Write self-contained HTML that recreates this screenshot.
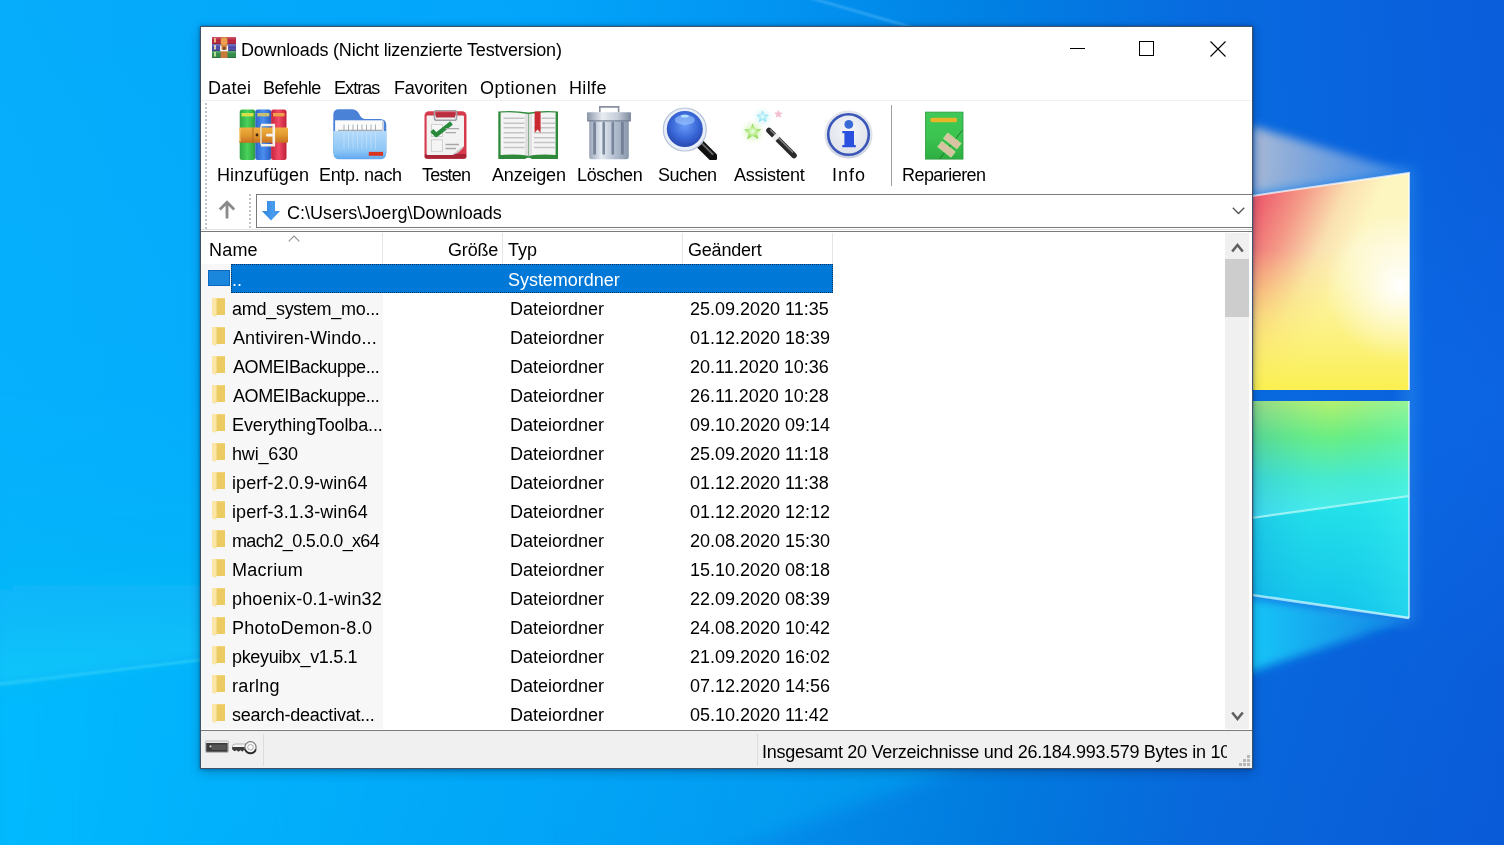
<!DOCTYPE html>
<html><head><meta charset="utf-8">
<style>
*{margin:0;padding:0;box-sizing:border-box}
html,body{width:1504px;height:845px;overflow:hidden}
body{position:relative;-webkit-font-smoothing:antialiased;font-family:"Liberation Sans",sans-serif;font-size:18px;color:#000;background:#0a9be8}
.a{position:absolute}
.t{position:absolute;line-height:20px;white-space:nowrap;will-change:transform}
#bg{position:absolute;left:0;top:0;width:1504px;height:845px;overflow:hidden}
#win{position:absolute;left:200px;top:26px;width:1053px;height:743px;background:#fff;border:1px solid rgba(0,25,60,.75);box-shadow:0 0 3px rgba(0,20,60,.45),0 3px 10px rgba(0,30,70,.3)}
.tl{width:120px;text-align:center;letter-spacing:-0.35px}
.row{position:absolute;left:0;height:29px;width:1050px}
.fold{position:absolute;left:11px;top:4px;width:13px;height:19px}
</style></head><body>
<div id="bg">
  <svg class="a" style="left:0;top:0" width="1504" height="845">
    <defs>
      <linearGradient id="baseH" x1="0" y1="0" x2="1504" y2="0" gradientUnits="userSpaceOnUse">
        <stop offset="0" stop-color="#06b0fc"/>
        <stop offset="0.36" stop-color="#02a8fc"/>
        <stop offset="0.52" stop-color="#0296f2"/>
        <stop offset="0.66" stop-color="#0082e4"/>
        <stop offset="0.8" stop-color="#086ce0"/>
        <stop offset="1" stop-color="#0a5edc"/>
      </linearGradient>
      <linearGradient id="baseV" x1="0" y1="0" x2="0" y2="845" gradientUnits="userSpaceOnUse">
        <stop offset="0" stop-color="#0a40c8" stop-opacity="0.03"/>
        <stop offset="0.5" stop-color="#0a50c0" stop-opacity="0"/>
        <stop offset="1" stop-color="#0a40b0" stop-opacity="0.12"/>
      </linearGradient>
      <linearGradient id="lowBeam" x1="0" y1="0" x2="1252" y2="0" gradientUnits="userSpaceOnUse">
        <stop offset="0" stop-color="#06bcff" stop-opacity=".9"/>
        <stop offset="0.45" stop-color="#04b0fc" stop-opacity=".4"/>
        <stop offset="1" stop-color="#10b0f4" stop-opacity=".45"/>
      </linearGradient>
      <linearGradient id="base" x1="1100" y1="0" x2="1504" y2="845" gradientUnits="userSpaceOnUse">
        <stop offset="0" stop-color="#0a70da"/>
        <stop offset="0.5" stop-color="#0968d6"/>
        <stop offset="1" stop-color="#0a52c0"/>
      </linearGradient>
      <linearGradient id="wedge" x1="0" y1="0" x2="1409" y2="0" gradientUnits="userSpaceOnUse">
        <stop offset="0" stop-color="#06b0fc"/>
        <stop offset="0.45" stop-color="#04b6fe"/>
        <stop offset="0.7" stop-color="#06a4f6"/>
        <stop offset="0.9" stop-color="#1aa0ee"/>
        <stop offset="1" stop-color="#2aa8f0"/>
      </linearGradient>
      <linearGradient id="leftV" x1="0" y1="0" x2="0" y2="845" gradientUnits="userSpaceOnUse">
        <stop offset="0" stop-color="#0898f0" stop-opacity=".25"/>
        <stop offset="0.45" stop-color="#05a5ef" stop-opacity="0"/>
        <stop offset="1" stop-color="#08bcff" stop-opacity=".45"/>
      </linearGradient>
      <linearGradient id="topP" x1="1252" y1="215" x2="1350" y2="260" gradientUnits="userSpaceOnUse">
        <stop offset="0" stop-color="#ee5e6c"/>
        <stop offset="0.35" stop-color="#f49a88"/>
        <stop offset="0.7" stop-color="#fae0b0"/>
        <stop offset="1" stop-color="#fdf6c0"/>
      </linearGradient>
      <linearGradient id="topPv" x1="0" y1="250" x2="0" y2="390" gradientUnits="userSpaceOnUse">
        <stop offset="0" stop-color="#fcf070" stop-opacity="0"/>
        <stop offset="0.5" stop-color="#fcf070" stop-opacity="0.65"/>
        <stop offset="1" stop-color="#faf050" stop-opacity="1"/>
      </linearGradient>
      <radialGradient id="glow" cx="1400" cy="286" r="75" gradientUnits="userSpaceOnUse">
        <stop offset="0" stop-color="#ffffff" stop-opacity="1"/>
        <stop offset="1" stop-color="#ffffff" stop-opacity="0"/>
      </radialGradient>
      <linearGradient id="botP" x1="0" y1="401" x2="0" y2="518" gradientUnits="userSpaceOnUse">
        <stop offset="0" stop-color="#b4f070"/>
        <stop offset="0.3" stop-color="#6cee80"/>
        <stop offset="0.65" stop-color="#48eacc"/>
        <stop offset="1" stop-color="#48ecf4"/>
      </linearGradient>
      <linearGradient id="botP2" x1="0" y1="500" x2="0" y2="618" gradientUnits="userSpaceOnUse">
        <stop offset="0" stop-color="#24e2e8"/>
        <stop offset="1" stop-color="#12c2ec"/>
      </linearGradient>
      <linearGradient id="botH" x1="1252" y1="0" x2="1409" y2="0" gradientUnits="userSpaceOnUse">
        <stop offset="0" stop-color="#0a70d8" stop-opacity=".22"/>
        <stop offset="0.5" stop-color="#20e0f0" stop-opacity="0"/>
        <stop offset="1" stop-color="#50fff0" stop-opacity=".3"/>
      </linearGradient>
      <linearGradient id="beamB" x1="1409" y1="0" x2="1252" y2="0" gradientUnits="userSpaceOnUse">
        <stop offset="0" stop-color="#20c8f4" stop-opacity=".3"/>
        <stop offset="1" stop-color="#14c4f8" stop-opacity="1"/>
      </linearGradient>
      <linearGradient id="beamT" x1="1252" y1="0" x2="1409" y2="0" gradientUnits="userSpaceOnUse">
        <stop offset="0" stop-color="#b0bcd4" stop-opacity=".95"/>
        <stop offset="1" stop-color="#90b8e8" stop-opacity=".4"/>
      </linearGradient>
      <linearGradient id="rightGlow" x1="0" y1="120" x2="0" y2="680" gradientUnits="userSpaceOnUse">
        <stop offset="0" stop-color="#1070f0" stop-opacity="0"/>
        <stop offset="0.5" stop-color="#1070f0" stop-opacity=".35"/>
        <stop offset="1" stop-color="#1070f0" stop-opacity="0"/>
      </linearGradient>
      <linearGradient id="upBeam" x1="0" y1="400" x2="0" y2="689" gradientUnits="userSpaceOnUse">
        <stop offset="0" stop-color="#08bcfc" stop-opacity="0"/>
        <stop offset="0.6" stop-color="#0cc0fa" stop-opacity=".45"/>
        <stop offset="1" stop-color="#12cafa" stop-opacity=".95"/>
      </linearGradient>
      <filter id="bl1" x="-10%" y="-50%" width="120%" height="200%"><feGaussianBlur stdDeviation="0.8"/></filter>
      <filter id="bl" x="-20%" y="-20%" width="140%" height="140%"><feGaussianBlur stdDeviation="9"/></filter>
      <filter id="bl2" x="-20%" y="-50%" width="140%" height="200%"><feGaussianBlur stdDeviation="5"/></filter>
      <filter id="bl3" x="-50%" y="-50%" width="200%" height="200%"><feGaussianBlur stdDeviation="7"/></filter>
    </defs>
    <rect width="1504" height="845" fill="url(#baseH)"/>
    <rect width="1504" height="845" fill="url(#baseV)"/>
    <polygon points="1252,518 -10,690 -10,860 700,860 1252,662" fill="url(#lowBeam)" filter="url(#bl)"/>
    <polygon points="1252,401 -10,380 -10,689 1252,518" fill="url(#upBeam)" filter="url(#bl)"/>
    <polyline points="-10,685 1252,535" stroke="#30d4fa" stroke-width="2" opacity=".8" filter="url(#bl1)"/>
    <polyline points="790,-8 1252,126" stroke="#48b4f8" stroke-width="2.2" opacity=".75" filter="url(#bl1)"/>
    <rect x="1409" y="120" width="95" height="560" fill="url(#rightGlow)"/>
    <!-- beam above top pane -->
    <polygon points="1252,126 1409,173 1252,196" fill="url(#beamT)" filter="url(#bl2)"/>
    <!-- glow around logo -->
    <polyline points="1252,196 1409,173 1409,618 1252,595" stroke="#40a0f0" stroke-width="8" fill="none" opacity=".55" filter="url(#bl3)"/>
    <polygon points="1252,196 1409,173 1409,390 1252,390" fill="url(#topP)"/>
    <polygon points="1252,196 1409,173 1409,390 1252,390" fill="url(#topPv)"/>
    <polygon points="1252,196 1409,173 1409,390 1252,390" fill="url(#glow)"/>
    <polygon points="1252,401 1409,401 1409,496 1252,518" fill="url(#botP)"/>
    <polygon points="1252,518 1409,496 1409,618 1252,595" fill="url(#botP2)"/>
    <polygon points="1252,401 1409,401 1409,618 1252,595" fill="url(#botH)"/>
    <polyline points="1252,518 1409,496" stroke="#c8fff8" stroke-width="2.2" fill="none" opacity="0.7"/>
    <polyline points="1252,595 1409,618" stroke="#e8ffff" stroke-width="2.5" fill="none" opacity="0.8"/>
    <polyline points="1409,401 1409,618" stroke="#e0ffff" stroke-width="2" fill="none" opacity="0.6"/>
    <polyline points="1252,196 1409,173 1409,390" stroke="#ffffff" stroke-width="2" fill="none" opacity="0.7"/>
    <!-- beam below bottom pane -->
    <polygon points="1240,597 1409,620 1240,675" fill="url(#beamB)" filter="url(#bl2)"/>
  </svg>
</div>
<div id="win"></div>
<!-- title bar -->
<svg class="a" style="left:212px;top:37px" width="24" height="21" viewBox="0 0 24 21">
  <defs><linearGradient id="wv" x1="0" y1="0" x2="0" y2="1"><stop offset="0" stop-color="#fff" stop-opacity=".25"/><stop offset=".5" stop-color="#fff" stop-opacity="0"/><stop offset="1" stop-color="#000" stop-opacity=".25"/></linearGradient></defs>
  <rect x="0" y="0" width="24" height="7" fill="#b8223c"/><rect x="0" y="0" width="24" height="7" fill="url(#wv)"/>
  <rect x="0" y="7" width="24" height="7" fill="#4a48a8"/><rect x="0" y="7" width="24" height="7" fill="url(#wv)"/>
  <rect x="0" y="14" width="24" height="7" fill="#2e8a44"/><rect x="0" y="14" width="24" height="7" fill="url(#wv)"/>
  <rect x="2" y="1" width="2" height="4.5" fill="#f0b080"/>
  <rect x="2" y="8" width="2" height="4.5" fill="#d8d0b0"/>
  <rect x="2" y="15" width="2" height="4.5" fill="#b8e090"/>
  <rect x="8.7" y="0" width="6.8" height="21" fill="#c87a3a"/>
  <rect x="9" y="0.5" width="6.2" height="8" rx="3" fill="#eca050"/>
  <path d="M8.8 8.5V13.5H15.4V8.5" stroke="#fafafa" stroke-width="1.4" fill="none"/>
  <rect x="11" y="10" width="2.4" height="3" fill="#7a4a2a"/>
</svg>
<div class="t" style="left:241.3px;top:39.5px;letter-spacing:-0.198px">Downloads (Nicht lizenzierte Testversion)</div>
<div class="a" style="left:1070px;top:48px;width:15px;height:1px;background:#000"></div>
<div class="a" style="left:1139px;top:41px;width:15px;height:15px;border:1px solid #000"></div>
<svg class="a" style="left:1210px;top:41px" width="16" height="16"><path d="M0.5 0.5L15.5 15.5M15.5 0.5L0.5 15.5" stroke="#000" stroke-width="1.1"/></svg>
<!-- menu -->
<div class="t" style="left:207.9px;top:77.8px;letter-spacing:0.25px">Datei</div>
<div class="t" style="left:263.2px;top:77.8px;letter-spacing:-0.45px">Befehle</div>
<div class="t" style="left:334.4px;top:77.8px;letter-spacing:-0.94px">Extras</div>
<div class="t" style="left:393.9px;top:77.8px;letter-spacing:-0.2px">Favoriten</div>
<div class="t" style="left:479.6px;top:77.8px;letter-spacing:0.5px">Optionen</div>
<div class="t" style="left:569px;top:77.8px;letter-spacing:0.35px">Hilfe</div>
<div class="a" style="left:201px;top:100px;width:1051px;height:1px;background:#f0f0f0"></div>
<!-- toolbar gripper -->
<div class="a" style="left:205px;top:103px;width:2px;height:127px;background:repeating-linear-gradient(#c4c4c4 0 2px,transparent 2px 4px)"></div>
<div class="a" style="left:891px;top:105px;width:1px;height:81px;background:#a0a0a0"></div>
<!-- Hinzufuegen -->
<svg class="a" style="left:239px;top:109px" width="49" height="52" viewBox="0 0 49 52">
  <defs>
    <linearGradient id="gG" x1="0" x2="1"><stop offset="0" stop-color="#2ea844"/><stop offset=".5" stop-color="#4ad25c"/><stop offset="1" stop-color="#2c9e40"/></linearGradient>
    <linearGradient id="gB" x1="0" x2="1"><stop offset="0" stop-color="#2c62c8"/><stop offset=".5" stop-color="#4a8ef0"/><stop offset="1" stop-color="#2a5cc0"/></linearGradient>
    <linearGradient id="gR" x1="0" x2="1"><stop offset="0" stop-color="#c82440"/><stop offset=".5" stop-color="#f04a66"/><stop offset="1" stop-color="#c02038"/></linearGradient>
    <linearGradient id="gBelt" x1="0" y1="0" x2="0" y2="1"><stop offset="0" stop-color="#f0b040"/><stop offset=".5" stop-color="#e09a30"/><stop offset="1" stop-color="#c87020"/></linearGradient>
  </defs>
  <rect x="0.7" y="0.5" width="15.6" height="50.5" rx="2.5" fill="url(#gG)"/>
  <rect x="16.3" y="0.5" width="15.8" height="50.5" rx="2.5" fill="url(#gB)"/>
  <rect x="32.1" y="0.5" width="15.4" height="50.5" rx="2.5" fill="url(#gR)"/>
  <rect x="2.5" y="4" width="12" height="3.4" fill="#d8e048"/>
  <rect x="18.3" y="4" width="12" height="3.4" fill="#c8c070"/>
  <rect x="34" y="4" width="11.5" height="3.4" fill="#f0a048"/>
  <rect x="0" y="18.4" width="49" height="15.3" rx="1.5" fill="url(#gBelt)"/>
  <path d="M1 19.5Q0 26 1 32.5" stroke="#f8d080" stroke-width="1.5" fill="none"/>
  <rect x="13.3" y="18.4" width="1.2" height="15.3" fill="#b06018" opacity=".7"/>
  <path d="M22 16H34.8V36.2H22" stroke="#f4f0ea" stroke-width="2.6" fill="none"/>
  <path d="M22 16.5V35.7" stroke="#e8d8c0" stroke-width="1.6"/>
  <circle cx="18" cy="26" r="1.4" fill="#402010"/>
  <rect x="27" y="24.8" width="8" height="2.8" rx="1.4" fill="#f4f4f4"/>
</svg>
<!-- Entp. nach -->
<svg class="a" style="left:333px;top:109px" width="54" height="51" viewBox="0 0 54 51">
  <defs>
    <linearGradient id="fFront" x1="0" y1="0" x2="0" y2="1"><stop offset="0" stop-color="#b4dafa"/><stop offset=".7" stop-color="#8cc6f6"/><stop offset="1" stop-color="#60a8ee"/></linearGradient>
  </defs>
  <path d="M0.3 6Q0.3 0.3 6 0.3H19Q23 0.3 26 4.5Q28 9.9 32 9.9H47Q53.3 9.9 53.3 16V44H0.3Z" fill="#4a82d8"/>
  <rect x="2.1" y="11.3" width="48" height="11" fill="#fbfbfb"/>
  <g stroke="#a8aeb6" stroke-width="1"><path d="M11 15.6V21.3M15.5 15.6V21.3M20 15.6V21.3M24.5 15.6V21.3M29 15.6V21.3M33.5 15.6V21.3M38 15.6V21.3M42.5 15.6V21.3"/></g>
  <path d="M5 21.3H49" stroke="#7a8088" stroke-width="0.8"/>
  <rect x="49" y="12" width="2" height="10" fill="#c8d0e0"/>
  <path d="M0.3 22H53.3V44Q53.3 50.3 47 50.3H6.3Q0.3 50.3 0.3 44Z" fill="url(#fFront)"/>
  <g stroke="#d0e8fc" stroke-width="1" opacity=".5"><path d="M11 23V40M15.5 23V40M20 23V40M24.5 23V40M29 23V40M33.5 23V40M38 23V40M42.5 23V40"/></g>
  <rect x="35.8" y="42.9" width="14.2" height="3.9" fill="#d83420"/>
</svg>
<!-- Testen -->
<svg class="a" style="left:424px;top:110px" width="44" height="50" viewBox="0 0 44 50">
  <rect x="0.5" y="1.3" width="42" height="47.5" rx="4.5" fill="#d63a4c"/>
  <rect x="0.5" y="44" width="42" height="4.8" rx="2" fill="#a82434"/>
  <path d="M2.6 6.5Q2.6 5.5 3.6 5.5H39Q40 5.5 40 6.5V36Q36 43 28 45H3.6Q2.6 45 2.6 44Z" fill="#f2f2f2"/>
  <path d="M40 36Q36 43 28 45Q35 39 40 36Z" fill="#c8c8c8"/>
  <rect x="10.5" y="0.5" width="22" height="9.8" rx="2" fill="none" stroke="#a0a0a8" stroke-width="1.6"/>
  <rect x="12" y="2.5" width="19" height="5" fill="#b83040"/>
  <rect x="7.4" y="14.6" width="11" height="12" fill="#f8f8f8" stroke="#c8c8c8" stroke-width=".8"/>
  <path d="M7.8 20.5L12.2 25L27.5 13" stroke="#2a8a3c" stroke-width="4.2" fill="none" stroke-linejoin="round"/>
  <rect x="7.4" y="29.8" width="11" height="11.5" fill="#f4f4f4" stroke="#c8c8c8" stroke-width=".8"/>
  <g stroke="#a8a8a8" stroke-width="1.4"><path d="M21.5 18.6H35M21.5 22.6H32M21.5 34.5H35M21.5 38.5H32"/></g>
</svg>
<!-- Anzeigen -->
<svg class="a" style="left:498px;top:110px" width="61" height="50" viewBox="0 0 61 50">
  <path d="M0.3 1.5Q15 0 30.5 2.5Q46 0 60 1.5V49H34Q30.5 46.5 27 49H0.3Z" fill="#2e8a3a"/>
  <path d="M2.6 2.5Q16 1.5 30 4V45.5Q17 44 2.6 45Z" fill="#f4f4f4"/>
  <path d="M31 4Q45 1.5 57.6 2.5V45Q45 44 31 45.5Z" fill="#f4f4f4"/>
  <path d="M27 4V45.5L30.5 46.5L34 45.5V4Z" fill="#d0d0d0" opacity=".55"/>
  <g stroke="#c4c4c4" stroke-width="1.5"><path d="M5.6 8.3H26.5M5.6 13.2H26.5M5.6 17.8H26.5M5.6 22.8H26.5M5.6 27.8H26.5M5.6 32.4H26.5M5.6 37.4H26.5"/>
  <path d="M43.6 8.3H57M43.6 13.2H57M36 17.8H57M36 22.8H57M36 27.8H57M36 32.4H57M36 37.4H57"/></g>
  <path d="M36.6 1.5H42.6V22.8L39.6 19.5L36.6 22.8Z" fill="#c82830"/>
</svg>
<!-- Loeschen -->
<svg class="a" style="left:586px;top:106px" width="46" height="55" viewBox="0 0 46 55">
  <defs>
    <linearGradient id="tLid" x1="0" x2="1"><stop offset="0" stop-color="#8a96a8"/><stop offset=".35" stop-color="#e8ecf2"/><stop offset=".7" stop-color="#c4ccd8"/><stop offset="1" stop-color="#7c889c"/></linearGradient>
    <linearGradient id="tBody" x1="0" x2="1"><stop offset="0" stop-color="#98a4b8"/><stop offset=".3" stop-color="#e4eaf2"/><stop offset=".6" stop-color="#b8c4d4"/><stop offset="1" stop-color="#8a98ac"/></linearGradient>
  </defs>
  <path d="M13.8 6.5V0.9H32.6V6.5" stroke="#8890a0" stroke-width="1.6" fill="none"/>
  <path d="M3.2 14.5H42.8V51Q42.8 53.2 40.6 53.2H5.4Q3.2 53.2 3.2 51Z" fill="url(#tBody)"/>
  <g fill="#6c7a90" opacity=".85"><rect x="7.2" y="15.8" width="2.8" height="33" rx="1.4"/><rect x="16.4" y="15.8" width="2.6" height="33" rx="1.3"/><rect x="25.5" y="15.8" width="2.6" height="33" rx="1.3"/><rect x="35" y="15.8" width="2.8" height="33" rx="1.4"/></g>
  <rect x="1" y="6.3" width="44" height="8.6" rx="1" fill="url(#tLid)"/>
  <path d="M1 14.9H45" stroke="#6a7488" stroke-width="1"/>
</svg>
<!-- Suchen -->
<svg class="a" style="left:661px;top:106px" width="56" height="54" viewBox="0 0 56 54">
  <defs>
    <radialGradient id="mBlue" cx=".5" cy=".4" r=".6"><stop offset="0" stop-color="#6a9cf8"/><stop offset=".6" stop-color="#3a68d8"/><stop offset="1" stop-color="#2848b0"/></radialGradient>
  </defs>
  <path d="M38 37L52 51" stroke="#101010" stroke-width="9" stroke-linecap="round"/>
  <path d="M40 36.5L51.5 48" stroke="#8a8a8a" stroke-width="2" stroke-linecap="round" opacity=".7"/>
  <circle cx="23.8" cy="23.5" r="21.5" fill="#e8eef8" stroke="#b8c4d8" stroke-width="1.2"/>
  <circle cx="23.8" cy="23" r="18" fill="url(#mBlue)"/>
  <ellipse cx="23.8" cy="14" rx="10" ry="5" fill="#9ec8ff" opacity=".6"/>
  <ellipse cx="23.8" cy="10" rx="4" ry="1.6" fill="#c0f0ff" opacity=".8"/>
</svg>
<!-- Assistent -->
<svg class="a" style="left:740px;top:106px" width="60" height="56" viewBox="0 0 60 56">
  <defs>
    <radialGradient id="sG"><stop offset="0" stop-color="#f0fff0"/><stop offset=".5" stop-color="#b8ec88"/><stop offset="1" stop-color="#88d050"/></radialGradient>
    <radialGradient id="sC"><stop offset="0" stop-color="#e8ffff"/><stop offset="1" stop-color="#78d8f0"/></radialGradient>
    <filter id="sgl" x="-50%" y="-50%" width="200%" height="200%"><feGaussianBlur stdDeviation="2"/></filter>
    <linearGradient id="wand" x1="0" y1="0" x2="1" y2="-1"><stop offset="0" stop-color="#202020"/><stop offset=".5" stop-color="#707070"/><stop offset="1" stop-color="#202020"/></linearGradient>
  </defs>
  <path d="M29 24.5L54 49.5" stroke="#2a2a2a" stroke-width="5.6" stroke-linecap="round"/>
  <path d="M30 23.5L53 46.5" stroke="#9a9a9a" stroke-width="1.4" opacity=".8"/>
  <path d="M34 29.5L37.5 33" stroke="#f0f0f0" stroke-width="6.4"/>
  <circle cx="12.7" cy="26" r="9" fill="#c8f0a0" opacity=".45" filter="url(#sgl)"/><circle cx="22.6" cy="11" r="6.5" fill="#b0ecf8" opacity=".5" filter="url(#sgl)"/>
  <path d="M12.7 17.5L15.3 22.8L21.2 23.3L16.8 27.2L18.3 33L12.7 30L7.3 33.3L8.6 27.4L4.2 23.5L10.1 22.8Z" fill="url(#sG)"/>
  <path d="M22.6 4.8L24.4 8.6L28.6 9L25.5 11.8L26.5 16L22.6 13.8L18.8 16L19.8 11.8L16.6 9L20.8 8.6Z" fill="url(#sC)"/>
  <path d="M38.4 3.8L39.7 6.5L42.7 6.8L40.5 8.8L41.2 11.8L38.4 10.2L35.7 11.8L36.4 8.8L34.1 6.8L37.1 6.5Z" fill="#f4c0d0"/>
</svg>
<!-- Info -->
<svg class="a" style="left:824px;top:110px" width="50" height="50" viewBox="0 0 50 50">
  <defs>
    <radialGradient id="iBg" cx=".5" cy=".4" r=".6"><stop offset="0" stop-color="#f4f6fa"/><stop offset=".8" stop-color="#dfe3ea"/><stop offset="1" stop-color="#c8ceda"/></radialGradient>
  </defs>
  <circle cx="24.5" cy="24.5" r="24" fill="url(#iBg)"/>
  <circle cx="24.5" cy="24.5" r="20.3" fill="none" stroke="#3a56b8" stroke-width="2.6"/>
  <circle cx="24.8" cy="14.4" r="4.4" fill="#3a6ad8"/>
  <path d="M18.3 21H30V35H31.8V37.2H18.3V35H20.4V23.2H18.3Z" fill="#2a50e0"/>
</svg>
<!-- Reparieren -->
<svg class="a" style="left:924px;top:111px" width="40" height="49" viewBox="0 0 40 49">
  <defs>
    <linearGradient id="rG" x1="0" y1="0" x2="0" y2="1"><stop offset="0" stop-color="#40c858"/><stop offset=".5" stop-color="#3cc450"/><stop offset="1" stop-color="#2eae42"/></linearGradient>
  </defs>
  <rect x="1.4" y="1.1" width="37.6" height="47" fill="url(#rG)" stroke="#2c9a3e" stroke-width=".8"/>
  <rect x="6.3" y="6.8" width="26.8" height="4.4" rx="2" fill="#e8b428"/>
  <path d="M38.6 19L15.5 48" stroke="#1e7a2c" stroke-width="1"/>
  <g transform="translate(28.3 29.9) rotate(38)"><rect x="-8.5" y="-3.5" width="17" height="7" fill="#d8c2a2" stroke="#c0dc98" stroke-width=".8"/></g>
  <g transform="translate(22.5 38.3) rotate(38)"><rect x="-8.5" y="-3.5" width="17" height="7" fill="#d8c2a2" stroke="#c0dc98" stroke-width=".8"/></g>
</svg>

<!-- toolbar labels -->
<div class="t" style="left:217px;top:165.3px;letter-spacing:0.111px">Hinzufügen</div>
<div class="t" style="left:319px;top:165.3px;letter-spacing:-0.333px">Entp. nach</div>
<div class="t" style="left:422px;top:165.3px;letter-spacing:-0.8px">Testen</div>
<div class="t" style="left:491.5px;top:165.3px;letter-spacing:-0.157px">Anzeigen</div>
<div class="t" style="left:576.7px;top:165.3px;letter-spacing:-0.383px">Löschen</div>
<div class="t" style="left:658px;top:165.3px;letter-spacing:-0.4px">Suchen</div>
<div class="t" style="left:734px;top:165.3px;letter-spacing:-0.275px">Assistent</div>
<div class="t" style="left:832px;top:165.3px;letter-spacing:1.0px">Info</div>
<div class="t" style="left:902.4px;top:165.3px;letter-spacing:-0.556px">Reparieren</div>
<!-- address row -->
<div class="a" style="left:201px;top:193px;width:1051px;height:1px;background:#fff"></div>
<div class="a" style="left:249px;top:194px;width:2px;height:36px;background:repeating-linear-gradient(#c4c4c4 0 2px,transparent 2px 4px)"></div>
<svg class="a" style="left:218px;top:200px" width="18" height="19" viewBox="0 0 18 19"><path d="M9 3V18.5M1.8 9.5L9 2.2L16.2 9.5" stroke="#8a8a8a" stroke-width="2.8" fill="none"/></svg>
<div class="a" style="left:256px;top:194px;width:996px;height:34px;border:1px solid #7a7a7a;border-right:none;background:#fff"></div>
<svg class="a" style="left:261px;top:201px" width="20" height="20" viewBox="0 0 20 20"><defs><linearGradient id="dArr" x1="0" x2="1"><stop offset="0" stop-color="#2a80d8"/><stop offset=".6" stop-color="#4a9cf0"/><stop offset="1" stop-color="#3a8ee4"/></linearGradient></defs><path d="M6 0H14V10H19L10 19.5L1 10H6Z" fill="url(#dArr)"/></svg>
<div class="t" style="left:287.3px;top:202.5px;letter-spacing:0.03px">C:\Users\Joerg\Downloads</div>
<svg class="a" style="left:1232px;top:207px" width="13" height="8"><path d="M0.8 0.8L6.5 6.5L12.2 0.8" stroke="#505050" stroke-width="1.3" fill="none"/></svg>
<!-- list box -->
<div class="a" style="left:201px;top:229px;width:1051px;height:1px;background:#e2e2e2"></div>
<div class="a" style="left:201px;top:231px;width:1051px;height:1px;background:#7a7a7a"></div>
<div class="a" style="left:201px;top:730px;width:1051px;height:1px;background:#7a7a7a"></div>
<div class="a" style="left:201px;top:232px;width:1050px;height:498px;background:#fff"></div>
<div class="a" style="left:201px;top:264px;width:182px;height:465px;background:#f7f7f7"></div>
<!-- header -->
<div class="a" style="left:382px;top:233px;width:1px;height:31px;background:#e5e5e5"></div>
<div class="a" style="left:502px;top:233px;width:1px;height:31px;background:#e5e5e5"></div>
<div class="a" style="left:682px;top:233px;width:1px;height:31px;background:#e5e5e5"></div>
<div class="a" style="left:832px;top:233px;width:1px;height:31px;background:#e5e5e5"></div>
<svg class="a" style="left:288px;top:235px" width="12" height="7"><path d="M0.7 6.3L6 1L11.3 6.3" stroke="#909090" stroke-width="1.1" fill="none"/></svg>
<div class="t" style="left:209px;top:240px;letter-spacing:0.2px">Name</div>
<div class="t" style="left:448px;top:240px;letter-spacing:-0.175px">Größe</div>
<div class="t" style="left:508px;top:240px">Typ</div>
<div class="t" style="left:688px;top:240px;letter-spacing:-0.2px">Geändert</div>
<div class="a" style="left:231px;top:264px;width:602px;height:29px;background:#0078d7;outline:1px dotted rgba(20,30,50,.75);outline-offset:-1px"></div>
<div class="a" style="left:208px;top:270px;width:22px;height:16px;background:#1a86dc;border:1px solid #0a68c0"></div>
<div class="t" style="left:232px;top:270px;color:#fff">..</div>
<div class="t" style="left:508px;top:270px;color:#fff;letter-spacing:-0.036px">Systemordner</div>
<svg class="a" style="left:211px;top:297px" width="15" height="20" viewBox="0 0 15 20"><path d="M1 1H14V18H6L4 19.5L1 18Z" fill="#f2d478"/><path d="M5.5 2H14V18H5.5Z" fill="#eccb62"/><path d="M1 1H5.5V18L4 19.5L1 18Z" fill="#fae6a6"/></svg>
<div class="t" style="left:232.4px;top:299px;letter-spacing:-0.28px">amd_system_mo...</div>
<div class="t" style="left:509.5px;top:299px">Dateiordner</div>
<div class="t" style="left:689.5px;top:299px">25.09.2020 11:35</div>
<svg class="a" style="left:211px;top:326px" width="15" height="20" viewBox="0 0 15 20"><path d="M1 1H14V18H6L4 19.5L1 18Z" fill="#f2d478"/><path d="M5.5 2H14V18H5.5Z" fill="#eccb62"/><path d="M1 1H5.5V18L4 19.5L1 18Z" fill="#fae6a6"/></svg>
<div class="t" style="left:233.4px;top:328px;letter-spacing:0.094px">Antiviren-Windo...</div>
<div class="t" style="left:509.5px;top:328px">Dateiordner</div>
<div class="t" style="left:689.5px;top:328px">01.12.2020 18:39</div>
<svg class="a" style="left:211px;top:355px" width="15" height="20" viewBox="0 0 15 20"><path d="M1 1H14V18H6L4 19.5L1 18Z" fill="#f2d478"/><path d="M5.5 2H14V18H5.5Z" fill="#eccb62"/><path d="M1 1H5.5V18L4 19.5L1 18Z" fill="#fae6a6"/></svg>
<div class="t" style="left:233.4px;top:357px;letter-spacing:-0.413px">AOMEIBackuppe...</div>
<div class="t" style="left:509.5px;top:357px">Dateiordner</div>
<div class="t" style="left:689.5px;top:357px">20.11.2020 10:36</div>
<svg class="a" style="left:211px;top:384px" width="15" height="20" viewBox="0 0 15 20"><path d="M1 1H14V18H6L4 19.5L1 18Z" fill="#f2d478"/><path d="M5.5 2H14V18H5.5Z" fill="#eccb62"/><path d="M1 1H5.5V18L4 19.5L1 18Z" fill="#fae6a6"/></svg>
<div class="t" style="left:233.4px;top:386px;letter-spacing:-0.413px">AOMEIBackuppe...</div>
<div class="t" style="left:509.5px;top:386px">Dateiordner</div>
<div class="t" style="left:689.5px;top:386px">26.11.2020 10:28</div>
<svg class="a" style="left:211px;top:413px" width="15" height="20" viewBox="0 0 15 20"><path d="M1 1H14V18H6L4 19.5L1 18Z" fill="#f2d478"/><path d="M5.5 2H14V18H5.5Z" fill="#eccb62"/><path d="M1 1H5.5V18L4 19.5L1 18Z" fill="#fae6a6"/></svg>
<div class="t" style="left:232.4px;top:415px;letter-spacing:-0.128px">EverythingToolba...</div>
<div class="t" style="left:509.5px;top:415px">Dateiordner</div>
<div class="t" style="left:689.5px;top:415px">09.10.2020 09:14</div>
<svg class="a" style="left:211px;top:442px" width="15" height="20" viewBox="0 0 15 20"><path d="M1 1H14V18H6L4 19.5L1 18Z" fill="#f2d478"/><path d="M5.5 2H14V18H5.5Z" fill="#eccb62"/><path d="M1 1H5.5V18L4 19.5L1 18Z" fill="#fae6a6"/></svg>
<div class="t" style="left:232.4px;top:444px;letter-spacing:-0.167px">hwi_630</div>
<div class="t" style="left:509.5px;top:444px">Dateiordner</div>
<div class="t" style="left:689.5px;top:444px">25.09.2020 11:18</div>
<svg class="a" style="left:211px;top:471px" width="15" height="20" viewBox="0 0 15 20"><path d="M1 1H14V18H6L4 19.5L1 18Z" fill="#f2d478"/><path d="M5.5 2H14V18H5.5Z" fill="#eccb62"/><path d="M1 1H5.5V18L4 19.5L1 18Z" fill="#fae6a6"/></svg>
<div class="t" style="left:232.4px;top:473px;letter-spacing:0.087px">iperf-2.0.9-win64</div>
<div class="t" style="left:509.5px;top:473px">Dateiordner</div>
<div class="t" style="left:689.5px;top:473px">01.12.2020 11:38</div>
<svg class="a" style="left:211px;top:500px" width="15" height="20" viewBox="0 0 15 20"><path d="M1 1H14V18H6L4 19.5L1 18Z" fill="#f2d478"/><path d="M5.5 2H14V18H5.5Z" fill="#eccb62"/><path d="M1 1H5.5V18L4 19.5L1 18Z" fill="#fae6a6"/></svg>
<div class="t" style="left:232.4px;top:502px;letter-spacing:0.1px">iperf-3.1.3-win64</div>
<div class="t" style="left:509.5px;top:502px">Dateiordner</div>
<div class="t" style="left:689.5px;top:502px">01.12.2020 12:12</div>
<svg class="a" style="left:211px;top:529px" width="15" height="20" viewBox="0 0 15 20"><path d="M1 1H14V18H6L4 19.5L1 18Z" fill="#f2d478"/><path d="M5.5 2H14V18H5.5Z" fill="#eccb62"/><path d="M1 1H5.5V18L4 19.5L1 18Z" fill="#fae6a6"/></svg>
<div class="t" style="left:232.4px;top:531px;letter-spacing:-0.65px">mach2_0.5.0.0_x64</div>
<div class="t" style="left:509.5px;top:531px">Dateiordner</div>
<div class="t" style="left:689.5px;top:531px">20.08.2020 15:30</div>
<svg class="a" style="left:211px;top:558px" width="15" height="20" viewBox="0 0 15 20"><path d="M1 1H14V18H6L4 19.5L1 18Z" fill="#f2d478"/><path d="M5.5 2H14V18H5.5Z" fill="#eccb62"/><path d="M1 1H5.5V18L4 19.5L1 18Z" fill="#fae6a6"/></svg>
<div class="t" style="left:232.4px;top:560px;letter-spacing:0.283px">Macrium</div>
<div class="t" style="left:509.5px;top:560px">Dateiordner</div>
<div class="t" style="left:689.5px;top:560px">15.10.2020 08:18</div>
<svg class="a" style="left:211px;top:587px" width="15" height="20" viewBox="0 0 15 20"><path d="M1 1H14V18H6L4 19.5L1 18Z" fill="#f2d478"/><path d="M5.5 2H14V18H5.5Z" fill="#eccb62"/><path d="M1 1H5.5V18L4 19.5L1 18Z" fill="#fae6a6"/></svg>
<div class="t" style="left:232.4px;top:589px;letter-spacing:0.169px">phoenix-0.1-win32</div>
<div class="t" style="left:509.5px;top:589px">Dateiordner</div>
<div class="t" style="left:689.5px;top:589px">22.09.2020 08:39</div>
<svg class="a" style="left:211px;top:616px" width="15" height="20" viewBox="0 0 15 20"><path d="M1 1H14V18H6L4 19.5L1 18Z" fill="#f2d478"/><path d="M5.5 2H14V18H5.5Z" fill="#eccb62"/><path d="M1 1H5.5V18L4 19.5L1 18Z" fill="#fae6a6"/></svg>
<div class="t" style="left:232.4px;top:618px;letter-spacing:0.3px">PhotoDemon-8.0</div>
<div class="t" style="left:509.5px;top:618px">Dateiordner</div>
<div class="t" style="left:689.5px;top:618px">24.08.2020 10:42</div>
<svg class="a" style="left:211px;top:645px" width="15" height="20" viewBox="0 0 15 20"><path d="M1 1H14V18H6L4 19.5L1 18Z" fill="#f2d478"/><path d="M5.5 2H14V18H5.5Z" fill="#eccb62"/><path d="M1 1H5.5V18L4 19.5L1 18Z" fill="#fae6a6"/></svg>
<div class="t" style="left:232.4px;top:647px;letter-spacing:-0.321px">pkeyuibx_v1.5.1</div>
<div class="t" style="left:509.5px;top:647px">Dateiordner</div>
<div class="t" style="left:689.5px;top:647px">21.09.2020 16:02</div>
<svg class="a" style="left:211px;top:674px" width="15" height="20" viewBox="0 0 15 20"><path d="M1 1H14V18H6L4 19.5L1 18Z" fill="#f2d478"/><path d="M5.5 2H14V18H5.5Z" fill="#eccb62"/><path d="M1 1H5.5V18L4 19.5L1 18Z" fill="#fae6a6"/></svg>
<div class="t" style="left:232.4px;top:676px;letter-spacing:0.32px">rarlng</div>
<div class="t" style="left:509.5px;top:676px">Dateiordner</div>
<div class="t" style="left:689.5px;top:676px">07.12.2020 14:56</div>
<svg class="a" style="left:211px;top:703px" width="15" height="20" viewBox="0 0 15 20"><path d="M1 1H14V18H6L4 19.5L1 18Z" fill="#f2d478"/><path d="M5.5 2H14V18H5.5Z" fill="#eccb62"/><path d="M1 1H5.5V18L4 19.5L1 18Z" fill="#fae6a6"/></svg>
<div class="t" style="left:232.4px;top:705px;letter-spacing:-0.244px">search-deactivat...</div>
<div class="t" style="left:509.5px;top:705px">Dateiordner</div>
<div class="t" style="left:689.5px;top:705px">05.10.2020 11:42</div>
<!-- scrollbar -->
<div class="a" style="left:1225px;top:233px;width:24px;height:496px;background:#f0f0f0"></div>
<div class="a" style="left:1225px;top:259px;width:24px;height:58px;background:#cdcdcd"></div>
<svg class="a" style="left:1231px;top:242px" width="13" height="11"><path d="M1.2 9.5L6.5 3L11.8 9.5" stroke="#606060" stroke-width="2.6" fill="none"/></svg>
<svg class="a" style="left:1231px;top:711px" width="13" height="11"><path d="M1.2 1.5L6.5 8L11.8 1.5" stroke="#606060" stroke-width="2.6" fill="none"/></svg>
<!-- status bar -->
<div class="a" style="left:201px;top:731px;width:1051px;height:37px;background:#f0f0f0"></div>
<div class="a" style="left:263px;top:734px;width:1px;height:32px;background:#dcdcdc"></div>
<div class="a" style="left:757px;top:734px;width:1px;height:32px;background:#dcdcdc"></div>
<div class="a" style="left:762px;top:731px;width:465px;height:37px;overflow:hidden"><div class="t" style="left:0;top:10.5px;letter-spacing:-0.27px">Insgesamt 20 Verzeichnisse und 26.184.993.579 Bytes in 10 Dateien</div></div>
<svg class="a" style="left:205px;top:740px" width="25" height="14" viewBox="0 0 25 14">
  <rect x="0.5" y="1" width="23" height="11.5" rx="1" fill="#e8e8e8" stroke="#b8b8b8" stroke-width="1"/>
  <rect x="1.2" y="3" width="21.4" height="8.8" fill="#3a3a3a"/>
  <rect x="6.5" y="4.5" width="15" height="5.5" fill="#555"/>
  <circle cx="5.5" cy="6.4" r="1.1" fill="#d0d0d0"/>
</svg>
<svg class="a" style="left:231px;top:739px" width="27" height="16" viewBox="0 0 27 16">
  <path d="M1.5 7.5Q1.5 5 4 5H15V9.5H1.5Z" fill="#f4f4f4" stroke="#9a9a9a" stroke-width=".7"/>
  <path d="M1.2 8H15V11.2H12.5L11.5 12.8L9.5 11.2L7.5 12.8L5.5 11.2L3.5 12.2L1.2 10.5Z" fill="#3c3c3c"/>
  <circle cx="19.5" cy="8.3" r="5.6" fill="#fafafa" stroke="#7a7a7a" stroke-width="1.3"/>
  <path d="M14.2 10.5A5.6 5.6 0 0 0 24.8 10.5" stroke="#2a2a2a" stroke-width="1.8" fill="none"/>
  <circle cx="19.5" cy="8.3" r="2.8" fill="none" stroke="#a8a8a8" stroke-width="1"/>
</svg>
<svg class="a" style="left:1239px;top:755px" width="12" height="12"><g fill="#b8b8b8"><rect x="8" y="0" width="3" height="3"/><rect x="4" y="4" width="3" height="3"/><rect x="8" y="4" width="3" height="3"/><rect x="0" y="8" width="3" height="3"/><rect x="4" y="8" width="3" height="3"/><rect x="8" y="8" width="3" height="3"/></g></svg>

</body></html>
